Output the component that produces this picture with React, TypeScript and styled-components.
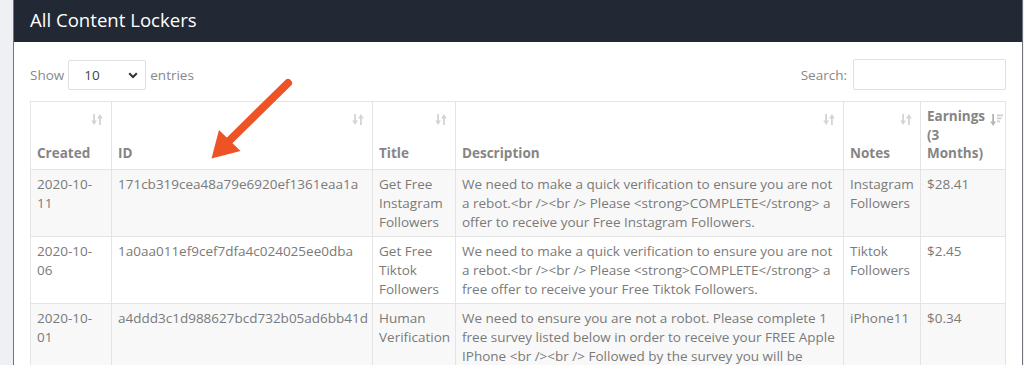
import React from 'react';
import styled, { createGlobalStyle } from 'styled-components';

const GlobalStyle = createGlobalStyle`
  html,
  body {
    margin: 0;
    padding: 0;
    background: #eef0f4;
    font-family: 'Open Sans', 'Liberation Sans', sans-serif;
    overflow: hidden;
  }
`;

const Page = styled.div`
  position: relative;
  padding: 0 1px 0 13px;
`;

const Panel = styled.div`
  background: #fff;
  border-left: 1px solid #6f737a;
  border-right: 1px solid #6f737a;
  min-height: 365px;
`;

const PanelHeader = styled.h3`
  margin: 0;
  height: 42px;
  display: flex;
  align-items: center;
  padding: 0 16px 2px;
  background: #222834;
  color: #fff;
  font-size: 18.6px;
  font-weight: 400;
  line-height: 1;
  box-sizing: border-box;
`;

const PanelBody = styled.div`
  padding: 17px 16px 0;
`;

const Controls = styled.div`
  display: flex;
  justify-content: space-between;
  align-items: center;
  height: 31px;
  font-size: 13.5px;
  color: #888;
`;

const Label = styled.label`
  display: flex;
  align-items: center;
  gap: 4px;
`;

const SelectWrap = styled.span`
  position: relative;
  display: inline-flex;
`;

const Select = styled.select`
  appearance: none;
  width: 78px;
  height: 30px;
  padding: 0 0 0 15px;
  border: 1px solid #e0e0e0;
  border-radius: 2px;
  background: #fff;
  color: #444;
  font-family: inherit;
  font-size: 13.5px;
`;

const Chevron = styled.svg`
  position: absolute;
  right: 8px;
  top: 12px;
  pointer-events: none;
`;

const SearchInput = styled.input`
  width: 153px;
  height: 31px;
  box-sizing: border-box;
  margin-left: 2px;
  border: 1px solid #e0e0e0;
  border-radius: 2px;
`;

const Table = styled.table`
  margin-top: 11px;
  width: 975px;
  table-layout: fixed;
  border-collapse: collapse;
  font-size: 13.5px;
  line-height: 18.7px;
  color: #7a7a7a;
`;

const Th = styled.th<{ $padRight?: number }>`
  position: relative;
  text-align: left;
  vertical-align: bottom;
  font-weight: 700;
  color: #858585;
  padding: 5px ${({ $padRight }) => $padRight ?? 6}px 6px 6px;
  border: 1px solid #e4e4e4;
  background: #fff;
`;

const SortIcon = styled.svg<{ $right?: number }>`
  position: absolute;
  top: 12px;
  right: ${({ $right }) => $right ?? 8}px;
`;

const Row = styled.tr<{ $striped: boolean }>`
  background: ${({ $striped }) => ($striped ? '#f8f8f8' : '#fff')};
`;

const Td = styled.td<{ $padRight?: number }>`
  vertical-align: top;
  padding: 5px ${({ $padRight }) => $padRight ?? 6}px 5px 6px;
  border: 1px solid #e4e4e4;
  overflow: visible;
`;

const ArrowOverlay = styled.svg`
  position: absolute;
  left: 0;
  top: 0;
  pointer-events: none;
`;

const SortBoth = ({ right }: { right?: number }) => (
  <SortIcon $right={right} width="12" height="11" viewBox="0 0 12 11">
    <g fill="#d4d4d4">
      <rect x="2.2" y="0" width="1.8" height="7" />
      <polygon points="0.2,6.5 6,6.5 3.1,11" />
      <rect x="8" y="4" width="1.8" height="7" />
      <polygon points="6.1,4.5 11.8,4.5 8.9,0" />
    </g>
  </SortIcon>
);

const SortDesc = () => (
  <SortIcon $right={2} width="13" height="12" viewBox="0 0 13 12">
    <g fill="#b5b5b5">
      <rect x="2.2" y="0" width="1.8" height="8" />
      <polygon points="0.2,7.5 6,7.5 3.1,12" />
    </g>
    <g fill="#cfcfcf">
      <rect x="7" y="0.5" width="6" height="1.8" />
      <rect x="7" y="3.5" width="4.5" height="1.8" />
      <rect x="7" y="6.5" width="3" height="1.8" />
    </g>
  </SortIcon>
);

type Locker = {
  created: string;
  id: string;
  title: string;
  description: string;
  notes: string;
  earnings: string;
};

const lockers: Locker[] = [
  {
    created: '2020-10-11',
    id: '171cb319cea48a79e6920ef1361eaa1a',
    title: 'Get Free Instagram Followers',
    description:
      'We need to make a quick verification to ensure you are not a rebot.<br /><br /> Please <strong>COMPLETE</strong> a offer to receive your Free Instagram Followers.',
    notes: 'Instagram Followers',
    earnings: '$28.41',
  },
  {
    created: '2020-10-06',
    id: '1a0aa011ef9cef7dfa4c024025ee0dba',
    title: 'Get Free Tiktok Followers',
    description:
      'We need to make a quick verification to ensure you are not a rebot.<br /><br /> Please <strong>COMPLETE</strong> a free offer to receive your Free Tiktok Followers.',
    notes: 'Tiktok Followers',
    earnings: '$2.45',
  },
  {
    created: '2020-10-01',
    id: 'a4ddd3c1d988627bcd732b05ad6bb41d',
    title: 'Human Verification',
    description:
      'We need to ensure you are not a robot. Please complete 1 free survey listed below in order to receive your FREE Apple IPhone <br /><br /> Followed by the survey you will be redirected to the download page.',
    notes: 'iPhone11',
    earnings: '$0.34',
  },
];

const columns = [
  { label: 'Created', width: 81 },
  { label: 'ID', width: 261 },
  { label: 'Title', width: 83 },
  { label: 'Description', width: 388 },
  { label: 'Notes', width: 77 },
];

export default function App() {
  return (
    <Page>
      <GlobalStyle />
      <Panel>
        <PanelHeader>All Content Lockers</PanelHeader>
        <PanelBody>
          <Controls>
            <Label>
              Show
              <SelectWrap>
                <Select defaultValue="10">
                  <option value="10">10</option>
                  <option value="25">25</option>
                  <option value="50">50</option>
                  <option value="100">100</option>
                </Select>
                <Chevron width="10" height="7" viewBox="0 0 10 7">
                  <path d="M1.2 1.2 L5 5 L8.8 1.2" fill="none" stroke="#333" strokeWidth="2" />
                </Chevron>
              </SelectWrap>
              entries
            </Label>
            <Label>
              Search:
              <SearchInput type="search" />
            </Label>
          </Controls>
          <Table>
            <colgroup>
              {columns.map(col => (
                <col key={col.label} style={{ width: col.width }} />
              ))}
              <col style={{ width: 85 }} />
            </colgroup>
            <thead>
              <tr>
                {columns.map(col => (
                  <Th key={col.label}>
                    <SortBoth />
                    {col.label}
                  </Th>
                ))}
                <Th $padRight={16}>
                  <SortDesc />
                  Earnings (3 Months)
                </Th>
              </tr>
            </thead>
            <tbody>
              {lockers.map((locker, i) => (
                <Row key={locker.id} $striped={i % 2 === 0}>
                  <Td $padRight={8}>{locker.created}</Td>
                  <Td $padRight={2}>{locker.id}</Td>
                  <Td $padRight={2}>{locker.title}</Td>
                  <Td>{locker.description}</Td>
                  <Td $padRight={3}>{locker.notes}</Td>
                  <Td>{locker.earnings}</Td>
                </Row>
              ))}
            </tbody>
          </Table>
        </PanelBody>
      </Panel>
      <ArrowOverlay width="1024" height="365" viewBox="0 0 1024 365">
        <line x1="288" y1="83" x2="226" y2="144" stroke="#ee5325" strokeWidth="8" strokeLinecap="round" />
        <polygon points="211.5,158.5 219,130 240.5,151" fill="#ee5325" />
      </ArrowOverlay>
    </Page>
  );
}
